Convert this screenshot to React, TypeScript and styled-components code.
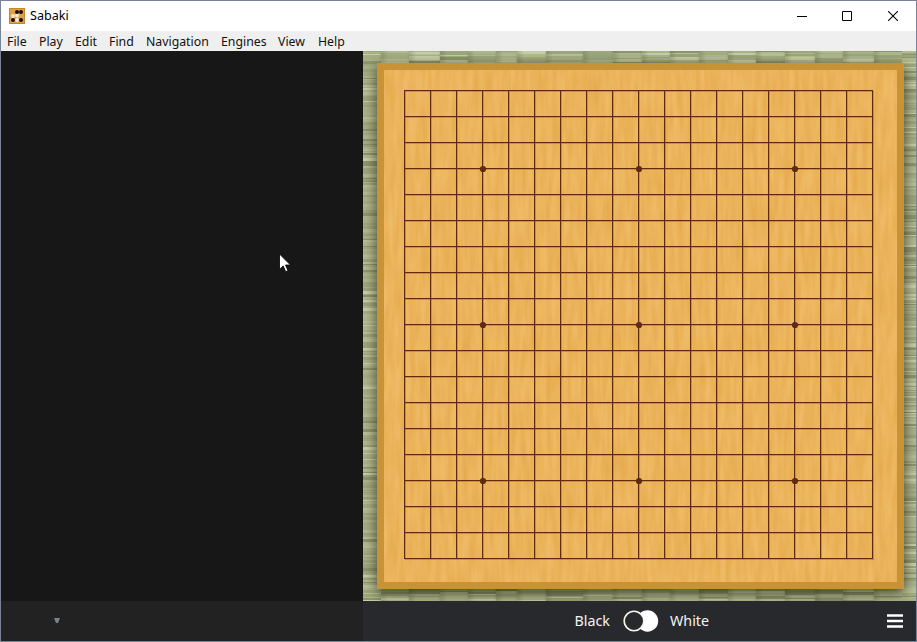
import React from 'react';
import styled, { createGlobalStyle } from 'styled-components';

const GlobalStyle = createGlobalStyle`
  * { box-sizing: border-box; }
  body { margin: 0; overflow: hidden; }
`;

const Window = styled.div`
  width: 917px;
  height: 642px;
  border: 1px solid #778397;
  display: grid;
  grid-template-rows: 30px 20px 1fr;
  background: #171717;
  font-family: 'Noto Sans', 'Open Sans', sans-serif;
`;

const TitleBar = styled.header`
  display: flex;
  align-items: center;
  background: #fff;
  padding-left: 8px;
`;

const Title = styled.span`
  flex: 1;
  margin-left: 5px;
  font-size: 12.6px;
  line-height: 16px;
  color: #000;
`;

const WindowButton = styled.button`
  width: 46px;
  height: 30px;
  padding: 0;
  border: 0;
  background: none;
  display: grid;
  place-items: center;
`;

const MenuBar = styled.nav`
  display: grid;
  grid-template-columns: 32px 36px 34px 37px 75px 57px 40px 40px;
  align-items: center;
  padding: 2px 0 0 6px;
  background: #efefef;
`;

const MenuItem = styled.span`
  font-size: 12.3px;
  line-height: 18px;
  color: #111;
  white-space: nowrap;
`;

const Main = styled.main`
  display: grid;
  grid-template-columns: 362px 1fr;
  min-height: 0;
`;

const Console = styled.aside`
  display: grid;
  grid-template-rows: 550px 40px;
`;

const ConsoleLog = styled.div`
  background: #171717;
  padding: 202px 0 0 277px;
`;

const ConsoleInput = styled.div`
  background: #222;
  display: flex;
  align-items: center;
  padding-left: 53px;
`;

const GameArea = styled.section`
  display: grid;
  grid-template-rows: 550px 40px;
`;

const Mat = styled.div`
  display: grid;
  overflow: hidden;
  background: #a3ac7c;
  & > * { grid-area: 1 / 1; }
`;

const Board = styled.div`
  width: 527px;
  height: 526px;
  margin: 12px 0 0 14px;
  border: 7px solid #c89237;
  background: #ecb55a;
  box-shadow: 0 4px 13px rgba(32, 20, 8, 0.75);
  z-index: 1;
  svg { display: block; }
`;

const PlayBar = styled.footer`
  background: #28292d;
  display: grid;
  grid-template-columns: 247px 60px 1fr 29px;
  align-items: center;
  color: #f4f4f4;
`;

const Player = styled.span<{ $side: 'left' | 'right' }>`
  font-size: 14.3px;
  line-height: 20px;
  text-align: ${p => (p.$side === 'left' ? 'right' : 'left')};
`;

const Turn = styled.div`
  display: grid;
  justify-content: end;
  padding-right: 11px;
`;

const MENUS = ['File', 'Play', 'Edit', 'Find', 'Navigation', 'Engines', 'View', 'Help'];
const LINES = Array.from({ length: 19 }, (_, i) => 20 + i * 26);
const STARS = [3, 9, 15].map(i => LINES[i]);

// Small deterministic generator, so the straw looks the same on every render.
function makeRandom(seed: number) {
  let s = seed;
  return () => {
    s = (s * 1664525 + 1013904223) % 4294967296;
    return s / 4294967296;
  };
}

const STRAW = ['#9ea87b', '#a6af82', '#acb68a', '#b3bc90', '#b9c297', '#c8cfa8', '#9ea87e', '#8d976e', '#aab388', '#b0b98d'];
const SEAMS = [0, 18, 46, 77, 105, 133, 154, 183, 220, 250, 279, 307, 336, 365, 393, 422, 452, 480, 511, 539, 553];

function Tatami() {
  const rnd = makeRandom(97);
  const straws: React.ReactNode[] = [];
  for (let c = 0; c < SEAMS.length - 1; c++) {
    let y = 0;
    while (y < 550) {
      const h = 1 + Math.floor(rnd() * 2.4);
      const fill = STRAW[Math.floor(rnd() * STRAW.length)];
      straws.push(<rect key={`${c}-${y}`} x={SEAMS[c]} y={y} width={SEAMS[c + 1] - SEAMS[c]} height={h} fill={fill} />);
      y += h;
    }
  }
  return (
    <svg width="553" height="550" shapeRendering="crispEdges">
      <linearGradient id="seam">
        <stop offset="0" stopColor="#56613f" stopOpacity="0" />
        <stop offset=".35" stopColor="#56613f" stopOpacity=".24" />
        <stop offset="1" stopColor="#56613f" stopOpacity="0" />
      </linearGradient>
      {straws}
      {SEAMS.slice(1, -2).map(x => (
        <rect key={x} x={x - 2} width="9" height="550" fill="url(#seam)" />
      ))}
    </svg>
  );
}

function Goban() {
  return (
    <svg width="513" height="512">
      <filter id="grain" x="0" y="0" width="100%" height="100%" colorInterpolationFilters="sRGB">
        <feTurbulence type="fractalNoise" baseFrequency=".19 .024" numOctaves="2" seed="8" />
        <feColorMatrix values="0 0 0 0 .87  0 0 0 0 .62  0 0 0 0 .23  .9 0 0 0 -.22" />
      </filter>
      <rect width="513" height="512" fill="#efba65" />
      <rect width="513" height="512" filter="url(#grain)" />
      <g shapeRendering="crispEdges">
        {LINES.map(p => (
          <React.Fragment key={p}>
            <rect x={p + 1} y="21" width="1" height="469" fill="#b96d22" opacity=".55" />
            <rect x="21" y={p + 1} width="469" height="1" fill="#b96d22" opacity=".55" />
          </React.Fragment>
        ))}
        {LINES.map(p => (
          <React.Fragment key={p}>
            <rect x={p} y="20" width="1" height="469" fill="#5e2c0c" />
            <rect x="20" y={p} width="469" height="1" fill="#5e2c0c" />
          </React.Fragment>
        ))}
      </g>
      {STARS.map(x => STARS.map(y => <circle key={`${x}-${y}`} cx={x + 1} cy={y + 1} r="3.1" fill="#5e2c0c" />))}
    </svg>
  );
}

function Logo() {
  const black = [[8, 4], [12, 4], [4, 12], [12, 12]];
  const white = [[8, 7.5], [4, 8], [8, 12]];
  return (
    <svg width="16" height="16">
      <rect width="16" height="16" fill="#c98526" />
      <rect x="1" y="1" width="14" height="14" fill="#dfa048" />
      {white.map(([x, y]) => <circle key={`${x}-${y}`} cx={x} cy={y} r="1.9" fill="#f2ecdc" />)}
      {black.map(([x, y]) => <circle key={`${x}-${y}`} cx={x} cy={y} r="2" fill="#17120c" />)}
    </svg>
  );
}

export default function App() {
  return (
    <>
      <GlobalStyle />
      <Window>
        <TitleBar>
          <Logo />
          <Title>Sabaki</Title>
          <WindowButton aria-label="Minimize">
            <svg width="12" height="10"><path d="M2 5.5h10" stroke="#000" /></svg>
          </WindowButton>
          <WindowButton aria-label="Maximize">
            <svg width="10" height="10"><path d="M.5.5h9v9h-9z" fill="none" stroke="#000" /></svg>
          </WindowButton>
          <WindowButton aria-label="Close">
            <svg width="10" height="10"><path d="M0 0l10 10M10 0L0 10" stroke="#000" strokeWidth="1.1" /></svg>
          </WindowButton>
        </TitleBar>
        <MenuBar>
          {MENUS.map(m => <MenuItem key={m}>{m}</MenuItem>)}
        </MenuBar>
        <Main>
          <Console>
            <ConsoleLog>
              <svg width="14" height="20">
                <path d="M1.5 1v15.4l3.7-3.5 2.5 5.8 2.3-1-2.5-5.7h5z" fill="#fff" stroke="#000" strokeWidth=".8" />
              </svg>
            </ConsoleLog>
            <ConsoleInput>
              <svg width="6" height="6"><path d="M0 0h6L4 5H2z" fill="#7c8388" /></svg>
            </ConsoleInput>
          </Console>
          <GameArea>
            <Mat>
              <Tatami />
              <Board><Goban /></Board>
            </Mat>
            <PlayBar>
              <Player $side="left">Black</Player>
              <Turn>
                <svg width="36" height="22">
                  <circle cx="24.5" cy="11" r="10.7" fill="#fff" />
                  <circle cx="11" cy="11" r="9.8" fill="#28292d" stroke="#f6f6e8" strokeWidth="1.6" />
                </svg>
              </Turn>
              <Player $side="right">White</Player>
              <svg width="16" height="14"><path d="M0 1.5h16M0 7h16M0 12.5h16" stroke="#fff" strokeWidth="2.6" /></svg>
            </PlayBar>
          </GameArea>
        </Main>
      </Window>
    </>
  );
}
